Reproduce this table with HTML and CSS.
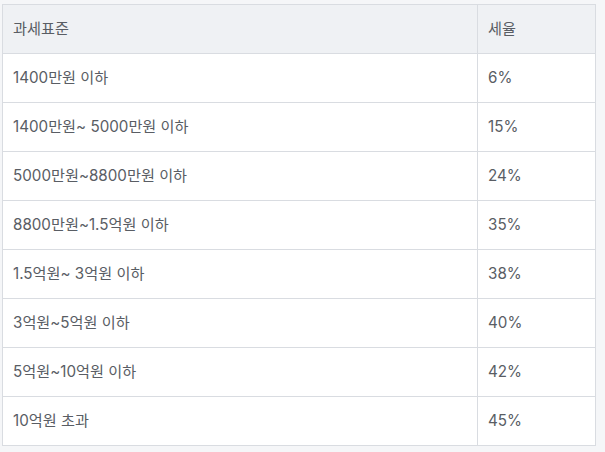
FILE: index.html
```html
<!DOCTYPE html>
<html lang="ko">
<head>
    <meta charset="utf-8">
    <title>과세표준</title>
    <link rel="stylesheet" href="styles.css">
</head>
<body>
    <table class="tax">
        <thead>
            <tr><th class="base">과세표준</th><th>세율</th></tr>
        </thead>
        <tbody>
            <tr><td>1400만원 이하</td><td>6%</td></tr>
            <tr><td>1400만원~ 5000만원 이하</td><td>15%</td></tr>
            <tr><td>5000만원~8800만원 이하</td><td>24%</td></tr>
            <tr><td>8800만원~1.5억원 이하</td><td>35%</td></tr>
            <tr><td>1.5억원~ 3억원 이하</td><td>38%</td></tr>
            <tr><td>3억원~5억원 이하</td><td>40%</td></tr>
            <tr><td>5억원~10억원 이하</td><td>42%</td></tr>
            <tr><td>10억원 초과</td><td>45%</td></tr>
        </tbody>
    </table>
</body>
</html>
```

FILE: styles.css
```css
/* page */
body {
    margin: 0;
    padding: 4px 10px 0 2px;
    background-color: #f5f6f8;
    font-family: Inter, "Noto Sans CJK KR", sans-serif;
    color: #595d64;
}

/* tax table */
.tax {
    width: 594px;
    border-collapse: collapse;
    background-color: #fff;
    font-size: 15.2px;
    line-height: 20px;
}

.tax th,
.tax td {
    height: 47px;
    padding: 0 0 1px 10px;
    border: 1px solid #d9dce1;
    text-align: left;
    font-weight: normal;
}

.tax th {
    background-color: #eff1f4;
}

.tax .base {
    width: 464px;
}
```
